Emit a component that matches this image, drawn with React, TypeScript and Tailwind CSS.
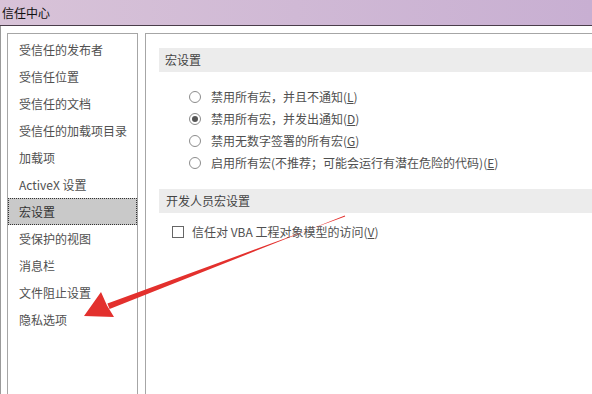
const font = { fontFamily: '"Noto Sans CJK SC", "Noto Sans", sans-serif' };

const navItems = [
  "受信任的发布者",
  "受信任位置",
  "受信任的文档",
  "受信任的加载项目录",
  "加载项",
  "ActiveX 设置",
  "宏设置",
  "受保护的视图",
  "消息栏",
  "文件阻止设置",
  "隐私选项",
];

const macroOptions = [
  { text: "禁用所有宏，并且不通知", key: "L", checked: false },
  { text: "禁用所有宏，并发出通知", key: "D", checked: true },
  { text: "禁用无数字签署的所有宏", key: "G", checked: false },
  { text: "启用所有宏(不推荐；可能会运行有潜在危险的代码)", key: "E", checked: false },
];

function Radio({ checked }: { checked: boolean }) {
  return (
    <span className="flex h-[12px] w-[12px] shrink-0 items-center justify-center rounded-full border border-[#8c8c8c] bg-white">
      {checked && <span className="h-[6px] w-[6px] rounded-full bg-[#555]" />}
    </span>
  );
}

function Arrow() {
  // tip (85,315) -> tail (345,216)
  return (
    <svg className="pointer-events-none absolute left-0 top-0" width="592" height="394" viewBox="0 0 592 394">
      <polygon points="109.6,309 107.4,303.4 345.2,216.5 344.8,215.5" fill="#e3302d" />
      <polygon points="84,316 101,292 107,305.5 114,317" fill="#e3302d" />
    </svg>
  );
}

export default function App() {
  return (
    <div className="relative h-[394px] w-[592px] overflow-hidden bg-white text-[#505050]" style={font}>
      {/* title bar */}
      <div className="flex h-[26px] items-center border-b border-[#4a3d4a] bg-gradient-to-r from-[#d8c3d8] to-[#c8afd2] pl-[2px] text-[12px] text-[#111]">
        信任中心
      </div>

      <div className="flex h-full gap-[7px] border-l border-[#9a9a9a] pl-[6px] pt-[7px]">
        {/* left nav */}
        <div className="w-[131px] shrink-0 border border-[#a6a6a6] pt-[2px]">
          {navItems.map((item) => (
            <div
              key={item}
              className={
                item === "宏设置"
                  ? "flex h-[27px] items-center border border-dotted border-[#333] bg-[#c9c9c9] pl-[10px] text-[12px] text-[#333]"
                  : "flex h-[27px] items-center pl-[11px] text-[12px]"
              }
            >
              {item}
            </div>
          ))}
        </div>

        {/* right pane */}
        <div className="flex-1 border-l border-t border-[#a6a6a6] pl-[13px] pt-[14px]">
          <div className="flex h-[24px] items-center bg-[#ececec] pl-[6px] text-[12px] text-[#444]">宏设置</div>

          <div className="mt-[14px] flex flex-col pl-[30px]">
            {macroOptions.map((o) => (
              <div key={o.key} className="flex h-[22px] items-center gap-[10px] text-[12px]">
                <Radio checked={o.checked} />
                <span>
                  {o.text}(<span className="underline">{o.key}</span>)
                </span>
              </div>
            ))}
          </div>

          <div className="mt-[15px] flex h-[24px] items-center bg-[#ececec] pl-[7px] text-[12px] text-[#444]">
            开发人员宏设置
          </div>

          <div className="mt-[8px] flex h-[22px] items-center gap-[8px] pl-[13px] text-[12px]">
            <span className="h-[12px] w-[12px] shrink-0 border border-[#666] bg-white" />
            <span>
              信任对 VBA 工程对象模型的访问(<span className="underline">V</span>)
            </span>
          </div>
        </div>
      </div>

      <Arrow />
    </div>
  );
}
